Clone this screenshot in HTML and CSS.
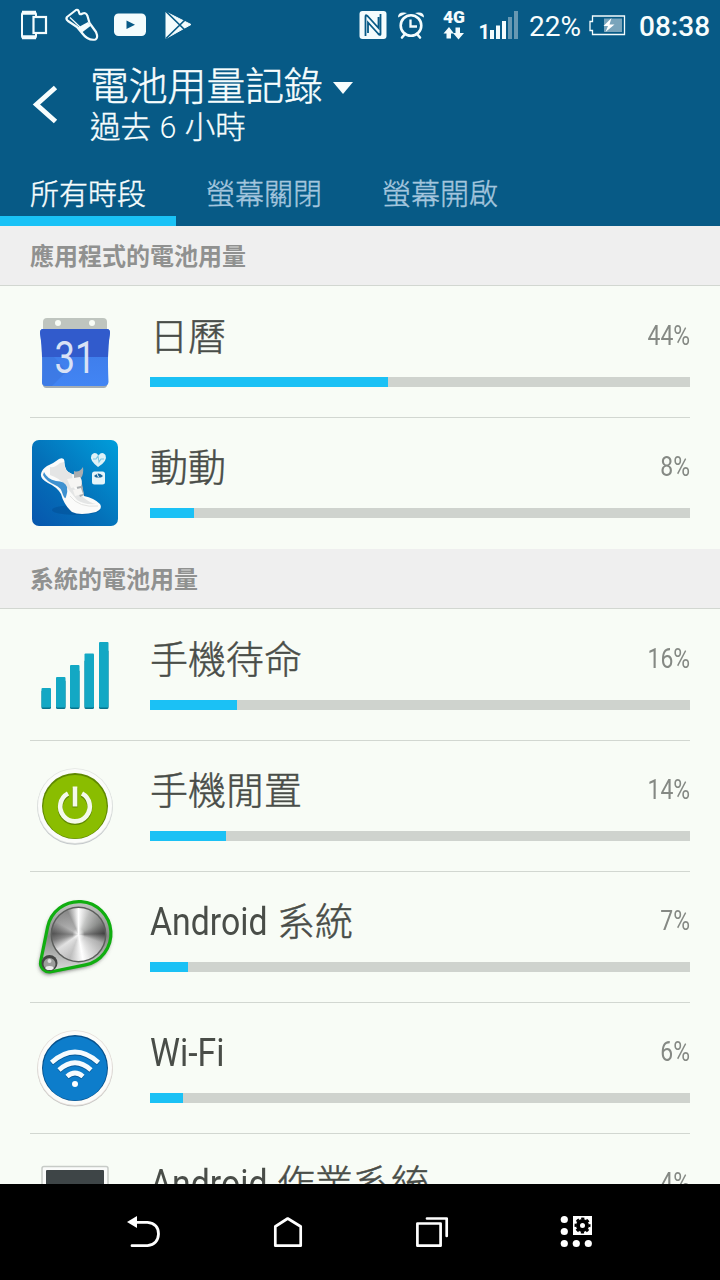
FILE: index.html
```html
<!DOCTYPE html>
<html lang="zh-Hant">
<head>
<meta charset="utf-8">
<title>電池用量記錄</title>
<link rel="stylesheet" href="styles.css">
</head>
<body>
<div class="screen">
  <header class="header">
    <div class="status">
      <svg class="status-left" width="240" height="50" viewBox="0 0 240 50">
        <rect x="22" y="12.5" width="14" height="25.5" rx="2" fill="none" stroke="#f4fcfd" stroke-width="2"/>
        <path d="M22 12.700h14M22 37.300h14" stroke="#f4fcfd" stroke-width="4"/>
        <rect x="33.5" y="17" width="12.5" height="16" fill="#075a86" stroke="#f4fcfd" stroke-width="2.2"/>
        <path d="M67 17L76 10Q78 9 79 12Q79.500 15.500 82.500 13.500Q86 12 87.500 16L89.500 23L96 32Q98.500 38 95.500 39.500Q88 41 82 33L77 27L68 21Q65.500 19 67 17Z" fill="none" stroke="#f4fcfd" stroke-width="2.200" stroke-linejoin="round"/>
        <path d="M77 28L88 22L90.500 26L82 32.500Z" fill="#f4fcfd"/>
        <path d="M70 17.500L80 27" stroke="#f4fcfd" stroke-width="1.200"/>
        <rect x="114" y="13.500" width="32" height="22.500" rx="4.500" fill="#f4fcfd"/>
        <path d="M126.500 20.500V29L135 24.700Z" fill="#075a86"/>
        <path d="M166 12L191 24.500L166 38.500Z" fill="#f4fcfd" stroke="#f4fcfd" stroke-width="1" stroke-linejoin="round"/>
        <path d="M166 11.500L188 33M166 38.500L188 17" stroke="#075a86" stroke-width="1.700"/>
      </svg>
      <svg class="status-right" width="160" height="50" viewBox="360 0 160 50">
        <rect x="359.500" y="11" width="27" height="28" rx="3" fill="#f4fcfd"/>
        <path d="M365.500 36V16.500Q365.500 14 368 16.500L378.500 28V17M380.500 14V34Q380.500 36 378 33.500L368 22.500V33" fill="none" stroke="#075a86" stroke-width="1.800"/>
        <circle cx="411" cy="25.500" r="10.300" fill="none" stroke="#f4fcfd" stroke-width="2.600"/>
        <path d="M410.500 19.500V26.500H417" fill="none" stroke="#f4fcfd" stroke-width="2.300"/>
        <path d="M398 17.500Q398 12 404 12.500L407 13ZM424 17.500Q424 12 418 12.500L415 13Z" fill="#f4fcfd"/>
        <path d="M405 34L402 37.500M417 34L420 37.500" stroke="#f4fcfd" stroke-width="2.600" stroke-linecap="round"/>
        <text x="443" y="22.700" class="network" textLength="22" lengthAdjust="spacingAndGlyphs">4G</text>
        <path d="M443.500 33.500L449 27L454 33.500H451V38.500H446.500V33.500ZM455.500 27.500H460V33H464L458.500 39.500L453 33H455.500Z" fill="#f4fcfd"/>
        <text x="478.500" y="38.500" class="sim">1</text>
        <path d="M490 30h4v9h-4zM496 25.500h4v13.500h-4zM502 21h4v18h-4z" fill="#f4fcfd"/>
        <path d="M508 17h4v22h-4zM514 11h4v28h-4z" fill="#6798b2"/>
      </svg>
      <span class="charge">22%</span>
      <svg class="battery" width="38" height="50" viewBox="588 0 38 50">
        <path d="M592.500 16h32v18.500h-32v-4h-2.500v-9h2.500z" fill="none" stroke="#f4fcfd" stroke-width="1.300"/>
        <rect x="604" y="18.500" width="18" height="13.500" fill="#79a4bb"/>
        <path d="M611.500 18L603.500 26H608L605.500 32L614.500 24.500H609.500Z" fill="#fff"/>
      </svg>
      <span class="clock">08:38</span>
    </div>
    <div class="titlebar">
      <svg class="back" width="90" height="100" viewBox="0 50 90 100"><path d="M55.500 87.500L36.500 104.500L55.500 121.500" fill="none" stroke="#f7fdfd" stroke-width="5"/></svg>
      <div class="titles">
        <div class="title">電池用量記錄<svg class="caret" width="20" height="12" viewBox="0 0 20 12"><path d="M0 0H20L10 12Z" fill="#f7fdfd"/></svg></div>
        <div class="subtitle">過去 <span class="hours">6</span> 小時</div>
      </div>
    </div>
    <nav class="tabs">
      <div class="tab active">所有時段</div>
      <div class="tab">螢幕關閉</div>
      <div class="tab">螢幕開啟</div>
    </nav>
  </header>

  <main class="content">
    <h2 class="section">應用程式的電池用量</h2>
    <div class="list">
      <div class="row">
        <svg class="icon" viewBox="0 0 90 90">
          <defs><linearGradient id="cal" x1="0" y1="0" x2="0" y2="1"><stop offset="0" stop-color="#3d78e3"/><stop offset="1" stop-color="#4285f4"/></linearGradient></defs>
          <path d="M13 26V15Q13 11 17 11H73Q77 11 77 15V26Z" fill="#bfc5bf"/>
          <circle cx="28" cy="16" r="3" fill="#f8fcf6"/><circle cx="62" cy="16" r="3" fill="#f8fcf6"/>
          <path d="M12 72Q12 81 16 81H74Q78 81 78 72Z" fill="#a4adb4"/>
          <path d="M13 22H77Q80 22 80 26Q77 41 78.500 75Q78 79 74 79H16Q12 79 12 75Q13 41 10 26Q10 22 13 22Z" fill="url(#cal)"/>
          <path d="M13 22H77Q80 22 80 26Q78 38 78 50H12Q12 38 10 26Q10 22 13 22Z" fill="#315bcc"/>
          <path d="M12 50H24L37 64L22 79H16Q12 79 12 75Z" fill="#3b74dd" opacity=".6"/>
          <text x="45" y="66" class="day" textLength="41" lengthAdjust="spacingAndGlyphs">31</text>
        </svg>
        <div class="body">
          <div class="line"><span class="label">日曆</span><span class="pct">44%</span></div>
          <div class="track"><div class="fill" style="width:44.07%"></div></div>
        </div>
      </div>
      <div class="row">
        <svg class="icon" viewBox="0 0 90 90">
          <defs><linearGradient id="fit" x1="1" y1="0" x2="0" y2="1"><stop offset="0" stop-color="#009edb"/><stop offset=".55" stop-color="#0471b9"/><stop offset="1" stop-color="#0756ad"/></linearGradient></defs>
          <rect x="2" y="2" width="86" height="86" rx="7" fill="url(#fit)"/>
          <ellipse cx="46" cy="72" rx="24" ry="5" fill="#034b91" opacity=".45"/>
          <path d="M11 36Q12 31 17 28Q24 25 29 21Q34 19 34.500 23Q34 33 42 36L48 37L52 48L54 58Q64 60 70 66Q73 71 66 74Q50 78 42 74Q34 67 31 56Q27 49 18 45Q10 41 11 36Z" fill="#fbfbfa"/>
          <path d="M20 29Q25 30 30 25L34 24Q34 33 42 36L44 50L54 60Q60 65 66 66Q54 67 47 62L34 46Q29 40 20 37Z" fill="#e4e5e5"/>
          <path d="M14 34Q17 41 26 43Q35 43 37 49Q38 54 36 59Q35 62 33 57Q31 49 25 47Q16 43 13 37Z" fill="#3e91d0"/>
          <path d="M44 33Q49 35 53 29Q54 36 51 40L54 57L50 59L47 50L44 41Z" fill="#a9adb0"/>
          <path d="M37 41L50 39Q53 43 51 48L41 50ZM43 52L51 50L53 56L45 58Z" fill="#f6f5f3"/>
          <path d="M40 58Q49 70 68 68" fill="none" stroke="#e3e3e1"/>
          <path d="M68 29Q59 22 61.500 17Q65 13 68.500 17.500Q72 13 75.500 17Q78 23 68 29Z" fill="#def2f7"/>
          <path d="M63 21H66L68 18L69 24L71 21H74" fill="none" stroke="#7cc8e3" stroke-width="1.100"/>
          <rect x="62" y="33.500" width="13" height="13" rx="2.500" fill="#e7f5f9"/>
          <path d="M64 38Q68.500 33 73 38L71 39.500H66Z" fill="#17669b"/><path d="M68.500 39L67 36" stroke="#fff"/>
        </svg>
        <div class="body">
          <div class="line"><span class="label">動動</span><span class="pct">8%</span></div>
          <div class="track"><div class="fill" style="width:8.15%"></div></div>
        </div>
      </div>
    </div>

    <h2 class="section">系統的電池用量</h2>
    <div class="list">
      <div class="row">
        <svg class="icon" viewBox="0 0 90 90">
          <g fill="#08738b"><rect x="11.500" y="60" width="9.500" height="19" rx="1.500"/><rect x="26" y="50" width="9.500" height="29" rx="1.500"/><rect x="40" y="40" width="9.500" height="39" rx="1.500"/><rect x="54.500" y="30" width="9.500" height="49" rx="1.500"/><rect x="69" y="20" width="9.500" height="59" rx="1.500"/></g>
          <g fill="#13a8c4"><rect x="11.500" y="58" width="9.500" height="19.500" rx="1"/><rect x="26" y="47" width="9.500" height="30.500" rx="1"/><rect x="40" y="35" width="9.500" height="42.500" rx="1"/><rect x="54.500" y="23.500" width="9.500" height="54" rx="1"/><rect x="69" y="12" width="9.500" height="65.500" rx="1"/></g>
        </svg>
        <div class="body">
          <div class="line"><span class="label">手機待命</span><span class="pct">16%</span></div>
          <div class="track"><div class="fill" style="width:16.11%"></div></div>
        </div>
      </div>
      <div class="row">
        <svg class="icon" viewBox="0 0 90 90">
          <circle cx="45" cy="46" r="37.800" fill="#c4c8cb"/><circle cx="45" cy="45" r="37.800" fill="#e2e5e2"/><circle cx="45" cy="45" r="37" fill="#fbfcfa"/>
          <circle cx="45" cy="45" r="33" fill="#5e8700"/><circle cx="45" cy="45.700" r="31.800" fill="#8abd00"/>
          <g fill="none" stroke="#5e8700" stroke-width="5"><path d="M38 33.700A14.800 14.800 0 1 0 52 33.700M45 27V46.500"/></g>
          <g fill="none" stroke="#f4f9eb" stroke-width="4.600"><path d="M38 32.500A14.800 14.800 0 1 0 52 32.500M45 25.500V45.500"/></g>
        </svg>
        <div class="body">
          <div class="line"><span class="label">手機閒置</span><span class="pct">14%</span></div>
          <div class="track"><div class="fill" style="width:14.07%"></div></div>
        </div>
      </div>
      <div class="row">
        <svg class="icon" viewBox="0 0 90 90">
          <defs><filter id="soft" x="-20%" y="-20%" width="140%" height="140%"><feGaussianBlur stdDeviation="2"/></filter>
          <radialGradient id="shine"><stop offset="0" stop-color="#fff"/><stop offset=".25" stop-color="#fff" stop-opacity=".3"/><stop offset="1" stop-color="#fff" stop-opacity="0"/></radialGradient>
          <linearGradient id="plate" x1="0" y1="0" x2="0" y2="1"><stop offset="0" stop-color="#c4c6c4"/><stop offset=".5" stop-color="#858785"/><stop offset="1" stop-color="#dcdedc"/></linearGradient></defs>
          <path d="M17 37A32 32 0 1 1 55 75L21 82A9 9 0 0 1 10 71Z" fill="#666" filter="url(#soft)"/>
          <path d="M16.600 35.100A32 32 0 1 1 54.400 72.900L20.300 79.800A9 9 0 0 1 9.700 69.200Z" transform="translate(1 0)" fill="url(#plate)" stroke="#10ae10" stroke-width="3.200"/>
          <circle cx="48.500" cy="42.500" r="28" fill="#5c5e5c"/>
          <foreignObject x="22" y="16" width="53" height="53"><div xmlns="http://www.w3.org/1999/xhtml" class="metal"></div></foreignObject>
          <circle cx="48.500" cy="42.500" r="25" fill="url(#shine)"/>
          <circle cx="19.500" cy="71" r="8" fill="#444644"/><circle cx="19.500" cy="72" r="6" fill="#9b9d9b"/><ellipse cx="19.500" cy="76" rx="4" ry="2" fill="#eee"/><circle cx="19.500" cy="69" r="2" fill="#ddd"/>
        </svg>
        <div class="body">
          <div class="line"><span class="label"><span class="latin android">Android</span>系統</span><span class="pct">7%</span></div>
          <div class="track"><div class="fill" style="width:7.04%"></div></div>
        </div>
      </div>
      <div class="row">
        <svg class="icon" viewBox="0 0 90 90">
          <circle cx="45" cy="45.800" r="37.800" fill="#c4c4c3"/><circle cx="45" cy="45" r="37.800" fill="#e6dfda"/><circle cx="45" cy="45" r="37" fill="#fbfcfa"/>
          <circle cx="45" cy="45" r="33" fill="#07508b"/><circle cx="45" cy="45.500" r="32" fill="#0d7dcb"/>
          <g fill="none" stroke="#085a98" stroke-width="4.700"><path d="M21.500 40.500Q45 19.500 68.500 40.500M29 48Q45 33.500 61 48M37 54.500Q45 47.500 53 54.500"/></g>
          <g fill="none" stroke="#f5fbfe" stroke-width="4.700"><path d="M21.500 39.500Q45 18.500 68.500 39.500M29 47Q45 32.500 61 47M37 53.500Q45 46.500 53 53.500"/></g><circle cx="45" cy="61" r="3" fill="#fff"/>
        </svg>
        <div class="body">
          <div class="line"><span class="label"><span class="latin wifi">Wi-Fi</span></span><span class="pct">6%</span></div>
          <div class="track"><div class="fill" style="width:6.11%"></div></div>
        </div>
      </div>
      <div class="row">
        <svg class="icon" viewBox="0 0 90 90">
          <rect x="12" y="12.500" width="66" height="50" rx="2" fill="#fafbfa" stroke="#c7cbc7" stroke-width="1.500"/><rect x="16" y="16" width="58" height="44" rx="1" fill="#3e4547"/>
        </svg>
        <div class="body">
          <div class="line"><span class="label"><span class="latin android">Android</span>作業系統</span><span class="pct">4%</span></div>
          <div class="track"><div class="fill" style="width:4%"></div></div>
        </div>
      </div>
    </div>
  </main>

  <footer class="navbar">
    <svg width="144" height="96" viewBox="72 1184 144 96"><path d="M136 1222.300H147.500Q158.500 1223.500 158.500 1234Q158 1244.500 147.500 1245.700H132" fill="none" stroke="#fff" stroke-width="2.800" stroke-linecap="round"/><path d="M127 1222L137 1216V1228Z" fill="#fff"/></svg>
    <svg width="144" height="96" viewBox="216 1184 144 96"><path d="M275.300 1245.700V1226.500L287.700 1218.500L300.700 1226.500V1245.700Z" fill="none" stroke="#fff" stroke-width="2.700" stroke-linejoin="round"/></svg>
    <svg width="144" height="96" viewBox="360 1184 144 96"><path d="M417.400 1223.500H440.600V1245.700H417.400ZM427 1218.500H446.700V1236" fill="none" stroke="#fff" stroke-width="2.700" stroke-linecap="round" stroke-linejoin="round"/></svg>
    <svg width="144" height="96" viewBox="504 1184 144 96"><g fill="#fff"><circle cx="564.300" cy="1219.500" r="3.600"/><circle cx="564.300" cy="1231.500" r="3.600"/><circle cx="564.300" cy="1243.500" r="3.600"/><circle cx="576.300" cy="1243.500" r="3.600"/><circle cx="588.300" cy="1243.500" r="3.600"/><rect x="573" y="1216" width="19" height="19"/></g><circle cx="582.500" cy="1225.500" r="4.500" fill="none" stroke="#000" stroke-width="4"/><circle cx="582.500" cy="1225.500" r="7" fill="none" stroke="#000" stroke-width="2" stroke-dasharray="3.200 2.300" stroke-dashoffset="1.600"/></svg>
  </footer>
</div>
</body>
</html>
```
FILE: styles.css
```css
* { box-sizing: border-box; }
body { margin: 0; background: #f8fcf6; font-family: Roboto, "Noto Sans CJK TC", sans-serif; }
svg { display: block; flex: none; }
.screen { width: 720px; height: 1280px; display: flex; flex-direction: column; overflow: hidden; }
.header { height: 226px; flex: none; background: #075a86; color: #f7fdfd; }
.status { height: 50px; display: flex; align-items: center; }
.status-right { margin-left: 120px; overflow: visible; }
.charge { width: 59px; margin-left: 9px; font-size: 28px; line-height: 50px; padding-top: 3px; }
.battery { overflow: visible; }
.clock { margin-left: 13px; font-size: 28px; font-weight: 500; line-height: 50px; padding-top: 3px; white-space: nowrap; }
.network { font: 900 17px Roboto, sans-serif; fill: #f4fcfd; }
.sim { font: 700 20px Roboto, sans-serif; fill: #f4fcfd; }
.titlebar { height: 110px; display: flex; }
.titles { padding-top: 16px; }
.title { height: 41px; line-height: 42px; font-size: 38.8px; font-weight: 300; -webkit-text-stroke: .5px; display: flex; align-items: center; white-space: nowrap; }
.caret { margin: 2px 0 0 10px; }
.subtitle { height: 42px; line-height: 42px; font-size: 30.5px; font-weight: 300; -webkit-text-stroke: .4px; white-space: pre; }
.hours { display: inline-block; margin: 0 1px; -webkit-text-stroke: 0; }
.tabs { height: 66px; display: flex; }
.tab { width: 176px; height: 66px; padding: 2px 0 0 30px; font-size: 29px; font-weight: 300; -webkit-text-stroke: .4px; line-height: 66px; color: #a4c6de; white-space: nowrap; }
.active { color: #f7fdfd; border-bottom: 10px solid #19c2f6; }
.content { height: 958px; flex: none; overflow: hidden; color: #494d48; }
.section { margin: 0; height: 60px; padding: 1px 0 0 30px; background: #efefef; border-bottom: 1px solid #d2d7d1; color: #909190; font-size: 24px; font-weight: 700; line-height: 60px; }
.list { padding-top: 1px; }
.row { height: 131px; margin: 0 30px; padding-top: 20px; display: flex; gap: 30px; border-bottom: 1px solid #d2d7d1; }
.row:last-child { border-bottom: 0; }
.icon { width: 90px; height: 90px; overflow: visible; }
.body { flex: 1; }
.line { height: 70px; display: flex; justify-content: space-between; }
.label { font-size: 38px; font-weight: 300; -webkit-text-stroke: .5px; line-height: 60px; white-space: nowrap; display: flex; }
.latin { font-weight: 400; -webkit-text-stroke: 0; transform: scaleX(.89); transform-origin: left center; }
.android { width: 127px; }
.pct { color: #858984; font-size: 27px; line-height: 59px; transform: scaleX(.85); transform-origin: right center; }
.track { height: 10px; background: #cfd3ce; }
.fill { height: 10px; background: #1bc1f5; }
.day { font: 400 44px Roboto, sans-serif; fill: #d8e2f5; text-anchor: middle; }
.metal { width: 53px; height: 53px; border-radius: 50%; background: conic-gradient(#fff 0deg, #b8b9b8 28deg, #858785 60deg, #444 88deg, #aaa 110deg, #ddd 150deg, #fff 170deg, #bbb 200deg, #ddd 235deg, #777 258deg, #555 272deg, #999 300deg, #8a8a8a 335deg, #fff 360deg); }
.navbar { height: 96px; flex: none; background: #000; display: flex; padding: 0 72px; }
```
